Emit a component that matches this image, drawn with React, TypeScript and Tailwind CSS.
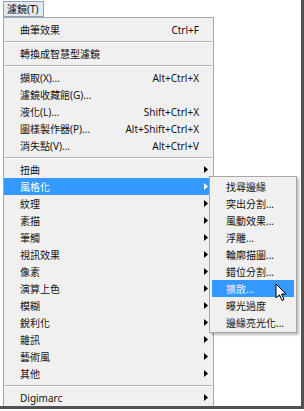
import React from "react";

type Item =
  | { type: "sep" }
  | { type: "item"; label: string; shortcut?: string; sub?: boolean; active?: boolean };

const mainItems: Item[] = [
  { type: "item", label: "曲筆效果", shortcut: "Ctrl+F" },
  { type: "sep" },
  { type: "item", label: "轉換成智慧型濾鏡" },
  { type: "sep" },
  { type: "item", label: "擷取(X)...", shortcut: "Alt+Ctrl+X" },
  { type: "item", label: "濾鏡收藏館(G)..." },
  { type: "item", label: "液化(L)...", shortcut: "Shift+Ctrl+X" },
  { type: "item", label: "圖樣製作器(P)...", shortcut: "Alt+Shift+Ctrl+X" },
  { type: "item", label: "消失點(V)...", shortcut: "Alt+Ctrl+V" },
  { type: "sep" },
  { type: "item", label: "扭曲", sub: true },
  { type: "item", label: "風格化", sub: true, active: true },
  { type: "item", label: "紋理", sub: true },
  { type: "item", label: "素描", sub: true },
  { type: "item", label: "筆觸", sub: true },
  { type: "item", label: "視訊效果", sub: true },
  { type: "item", label: "像素", sub: true },
  { type: "item", label: "演算上色", sub: true },
  { type: "item", label: "模糊", sub: true },
  { type: "item", label: "銳利化", sub: true },
  { type: "item", label: "雜訊", sub: true },
  { type: "item", label: "藝術風", sub: true },
  { type: "item", label: "其他", sub: true },
  { type: "sep" },
  { type: "item", label: "Digimarc", sub: true },
];

const subItems = [
  "找尋邊緣",
  "突出分割...",
  "風動效果...",
  "浮雕...",
  "輪廓描圖...",
  "錯位分割...",
  "擴散...",
  "曝光過度",
  "邊緣亮光化...",
];

function Arrow({ white }: { white?: boolean }) {
  return (
    <svg width="4" height="7" viewBox="0 0 4 7" className="block">
      <path d="M0 0 L4 3.5 L0 7 Z" fill={white ? "#ffffff" : "#000000"} />
    </svg>
  );
}

function Separator() {
  return (
    <div className="h-[7px] flex flex-col justify-center px-[1px]">
      <div className="h-[1px] bg-[#b4b4b4]" />
      <div className="h-[1px] bg-white" />
    </div>
  );
}

export default function App() {
  return (
    <div
      className="relative w-[304px] h-[411px] bg-white overflow-hidden text-[10px] leading-none text-[#111111]"
      style={{ fontFamily: '"Noto Sans", "Noto Sans CJK TC", sans-serif' }}
    >
      <div className="w-[304px] h-[409px] border-r-[3px] border-b-[3px] border-r-[#525252] border-b-[#525252] flex flex-col pl-[3px] pt-[1px]">
        <div className="h-[16px] w-[41px] border border-[#8fa3bf] bg-[#e2e9f3] flex items-center pl-[3px]">
          濾鏡(T)
        </div>
        <div className="w-[211px] flex-1 border-l border-t border-r border-[#a7a7a7] bg-[#f0f0f0] pt-[3px] flex flex-col">
          {mainItems.map((it, i) =>
            it.type === "sep" ? (
              <Separator key={i} />
            ) : (
              <div
                key={i}
                className={
                  "h-[17px] flex items-center pl-[16px] " +
                  (it.active ? "bg-[#3399ff] text-white" : "")
                }
              >
                <span className="flex-1">{it.label}</span>
                {it.shortcut && <span>{it.shortcut}</span>}
                <span className="w-[14px] h-[17px] flex items-center pl-[5px] shrink-0">
                  {it.sub && <Arrow white={it.active} />}
                </span>
              </div>
            )
          )}
        </div>
      </div>

      <div className="absolute left-[209px] top-[176px] w-[88px] border border-[#a7a7a7] bg-[#f0f0f0] px-[2px] py-[1px] shadow-[2px_2px_2px_rgba(0,0,0,0.25)] flex flex-col">
        {subItems.map((s, i) => (
          <div
            key={i}
            className={
              "h-[17px] flex items-center pl-[14px] " +
              (i === 6 ? "bg-[#3399ff] text-[#e6f2ff]" : "")
            }
          >
            {s}
          </div>
        ))}
      </div>

      <svg
        className="absolute left-[275px] top-[283px]"
        width="13"
        height="19"
        viewBox="0 0 13 19"
      >
        <path
          d="M1 1 L1 15 L4.5 11.8 L7 17.5 L9 16.6 L6.6 11 L11 11 Z"
          fill="#ffffff"
          stroke="#000000"
          strokeWidth="1"
          strokeLinejoin="miter"
        />
      </svg>
    </div>
  );
}
